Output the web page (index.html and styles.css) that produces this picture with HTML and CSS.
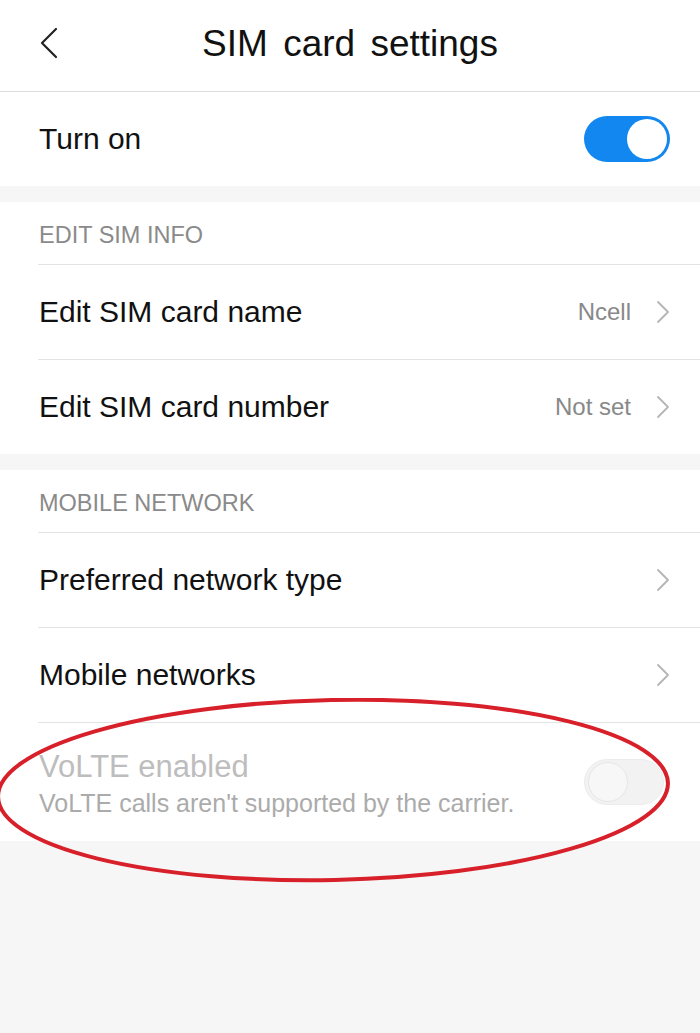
FILE: index.html
```html
<!DOCTYPE html>
<html>
<head>
<meta charset="utf-8">
<link rel="stylesheet" href="styles.css">
</head>
<body>
<div class="screen">
  <header class="topbar">
    <svg class="back" width="20" height="32" viewBox="0 0 20 32"><path d="M17 2 L3 16 L17 30" fill="none" stroke="#222" stroke-width="2.2" stroke-linecap="round" stroke-linejoin="round"/></svg>
    <h1 class="title">SIM card settings</h1>
  </header>

  <section class="group">
    <div class="row row-top">
      <span class="label">Turn on</span>
      <span class="toggle on"><span class="knob"></span></span>
    </div>
  </section>

  <div class="gap"></div>

  <section class="group">
    <div class="section-head">EDIT SIM INFO</div>
    <div class="row row-main bordered">
      <span class="label">Edit SIM card name</span>
      <span class="trail"><span class="value">Ncell</span><svg class="chev" width="14" height="24" viewBox="0 0 14 24"><path d="M2 2 L12 12 L2 22" fill="none" stroke="#b5b5b5" stroke-width="1.8" stroke-linecap="round" stroke-linejoin="round"/></svg></span>
    </div>
    <div class="row row-main bordered">
      <span class="label">Edit SIM card number</span>
      <span class="trail"><span class="value">Not set</span><svg class="chev" width="14" height="24" viewBox="0 0 14 24"><path d="M2 2 L12 12 L2 22" fill="none" stroke="#b5b5b5" stroke-width="1.8" stroke-linecap="round" stroke-linejoin="round"/></svg></span>
    </div>
  </section>

  <div class="gap"></div>

  <section class="group">
    <div class="section-head">MOBILE NETWORK</div>
    <div class="row row-main bordered">
      <span class="label">Preferred network type</span>
      <span class="trail"><svg class="chev" width="14" height="24" viewBox="0 0 14 24"><path d="M2 2 L12 12 L2 22" fill="none" stroke="#b5b5b5" stroke-width="1.8" stroke-linecap="round" stroke-linejoin="round"/></svg></span>
    </div>
    <div class="row row-main bordered">
      <span class="label">Mobile networks</span>
      <span class="trail"><svg class="chev" width="14" height="24" viewBox="0 0 14 24"><path d="M2 2 L12 12 L2 22" fill="none" stroke="#b5b5b5" stroke-width="1.8" stroke-linecap="round" stroke-linejoin="round"/></svg></span>
    </div>
    <div class="row row-volte bordered">
      <div class="texts">
        <span class="label disabled">VoLTE enabled</span>
        <span class="sub">VoLTE calls aren't supported by the carrier.</span>
      </div>
      <span class="toggle off"><span class="knob"></span></span>
    </div>
  </section>

  <svg class="annot" width="700" height="200" viewBox="0 0 700 200">
    <ellipse cx="333" cy="92" rx="335" ry="90" transform="rotate(-1.2 333 92)" fill="none" stroke="#d7202a" stroke-width="4"/>
  </svg>
</div>
</body>
</html>
```

FILE: styles.css
```css
* { box-sizing: border-box; }
html, body { margin: 0; padding: 0; }
body {
  background: #f6f6f6;
  font-family: "Liberation Sans", Arial, sans-serif;
  color: #1a1a1a;
}
.screen {
  position: relative;
  width: 700px;
  min-height: 1033px;
  background: #f6f6f6;
  overflow: hidden;
}
.topbar {
  height: 92px;
  background: #fff;
  border-bottom: 1px solid #dcdcdc;
  display: flex;
  align-items: center;
  justify-content: center;
  position: relative;
}
.back {
  position: absolute;
  left: 39px;
  top: 27px;
}
.title {
  margin: 0;
  font-weight: 400;
  font-size: 37px;
  word-spacing: 5px;
  color: #111;
  padding-bottom: 4px;
}
.group {
  background: #fff;
}
.gap {
  height: 16px;
}
.row {
  display: flex;
  align-items: center;
  justify-content: space-between;
  padding-left: 39px;
  padding-right: 30px;
}
.row-top {
  height: 94px;
}
.row-main {
  height: 95px;
}
.bordered {
  margin-left: 38px;
  padding-left: 1px;
  border-top: 1px solid #e3e3e3;
}
.label {
  font-size: 30px;
  color: #111;
}
.section-head {
  height: 62px;
  padding-left: 39px;
  padding-top: 20px;
  font-size: 23.5px;
  color: #8a8a8a;
}
.trail {
  display: flex;
  align-items: center;
  gap: 25px;
}
.value {
  font-size: 24px;
  color: #888;
}
.chev { display: block; }
.toggle {
  width: 86px;
  height: 46px;
  border-radius: 23px;
  display: flex;
  align-items: center;
  padding: 3px;
}
.toggle.on {
  background: #1187ef;
  justify-content: flex-end;
}
.toggle .knob {
  width: 40px;
  height: 40px;
  border-radius: 50%;
  background: #fff;
}
.toggle.off {
  background: #f2f2f2;
  border: 1px solid #ececec;
  width: 80px;
  margin-right: 6px;
}
.toggle.off .knob {
  background: #f7f7f7;
  border: 1px solid #e6e6e6;
}
.row-volte {
  height: 119px;
}
.texts {
  display: flex;
  flex-direction: column;
  gap: 4px;
  padding-top: 2px;
}
.label.disabled {
  font-size: 31px;
  color: #bdbdbd;
}
.sub {
  font-size: 25px;
  color: #ababab;
}
.annot {
  position: absolute;
  left: 0;
  top: 698px;
  pointer-events: none;
}
```
